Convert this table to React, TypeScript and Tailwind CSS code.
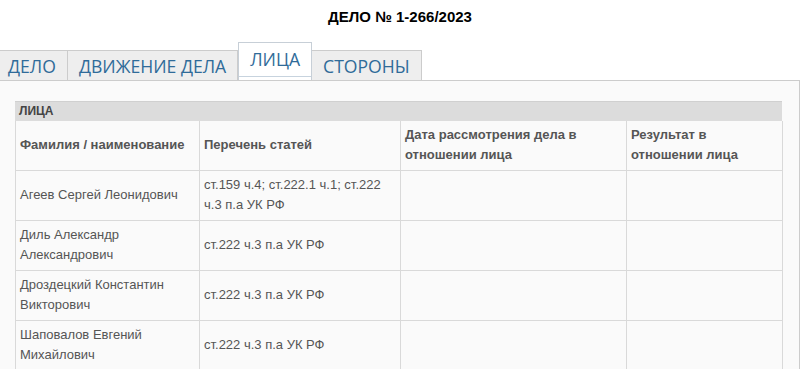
import React from 'react';

type Person = {
  name: string;
  articles: string;
};

const people: Person[] = [
  { name: 'Агеев Сергей Леонидович', articles: 'ст.159 ч.4; ст.222.1 ч.1; ст.222 ч.3 п.а УК РФ' },
  { name: 'Диль Александр Александрович', articles: 'ст.222 ч.3 п.а УК РФ' },
  { name: 'Дроздецкий Константин Викторович', articles: 'ст.222 ч.3 п.а УК РФ' },
  { name: 'Шаповалов Евгений Михайлович', articles: 'ст.222 ч.3 п.а УК РФ' },
];

const tabs = ['ДЕЛО', 'ДВИЖЕНИЕ ДЕЛА', 'ЛИЦА', 'СТОРОНЫ'];
const activeTab = 'ЛИЦА';

function Tabs() {
  return (
    <div className="flex items-end h-[38px] font-['Open_Sans',sans-serif] text-[17.6px]">
      {tabs.map((tab) =>
        tab === activeTab ? (
          <div
            key={tab}
            className="h-[38px] px-[11px] pt-[3px] border border-[#c7cfd7] border-b-0 bg-white text-[#2f6b99] relative"
          >
            {tab}
            <div className="absolute left-0 right-0 bottom-[3px] border-b border-[#c7d3de]" />
          </div>
        ) : (
          <div
            key={tab}
            className="h-[30px] px-[11px] pt-[2px] border border-b-0 border-l-0 border-[#cccccc] bg-[#eeeeee] text-[#2f6b99] leading-[26px] first:pl-[8px]"
          >
            {tab}
          </div>
        )
      )}
    </div>
  );
}

export default function App() {
  const cell = 'border border-[#d9d9d9] px-[4px] align-middle';
  return (
    <div className="w-[800px] h-[369px] overflow-hidden bg-white font-['Liberation_Sans',Arial,sans-serif]">
      <h1 className="pt-[9px] pb-[17px] text-center text-[15px] leading-[16px] font-bold text-black">
        ДЕЛО № 1-266/2023
      </h1>

      <Tabs />

      <div className="w-[800px] border-t border-r border-[#cccccc] bg-[#fafafa] pl-[15px] pr-[17px] pt-[20px]">
        <div className="h-[20px] bg-[#dcdcdc] border-t border-[#d0d0d0] pl-[4px] text-[12px] leading-[19px] font-bold text-[#444]">
          ЛИЦА
        </div>
        <table className="w-[767px] table-fixed border-collapse text-[13px] leading-[20px] text-[#555]">
          <colgroup>
            <col className="w-[184px]" />
            <col className="w-[201px]" />
            <col className="w-[226px]" />
            <col className="w-[156px]" />
          </colgroup>
          <thead>
            <tr className="h-[49px] font-bold">
              <th className={`${cell} text-left border-t-0`}>Фамилия / наименование</th>
              <th className={`${cell} text-left border-t-0`}>Перечень статей</th>
              <th className={`${cell} text-left border-t-0`}>Дата рассмотрения дела в отношении лица</th>
              <th className={`${cell} text-left border-t-0`}>Результат в отношении лица</th>
            </tr>
          </thead>
          <tbody>
            {people.map((p) => (
              <tr key={p.name} className="h-[50px]">
                <td className={cell}>{p.name}</td>
                <td className={cell}>{p.articles}</td>
                <td className={cell}></td>
                <td className={cell}></td>
              </tr>
            ))}
          </tbody>
        </table>
      </div>
    </div>
  );
}
